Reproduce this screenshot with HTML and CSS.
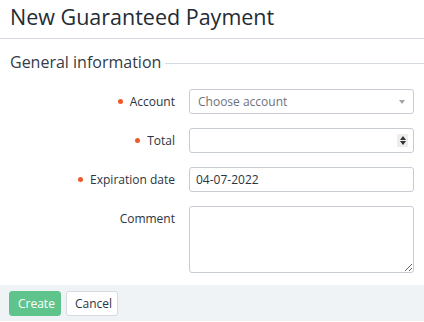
FILE: index.html
```html
<!DOCTYPE html>
<html>
<head>
<meta charset="utf-8">
<link rel="stylesheet" href="styles.css">
</head>
<body>
<div class="page">
  <h1 class="title">New Guaranteed Payment</h1>
  <div class="section">
    <div class="legend"><span class="legend-text">General information</span><span class="legend-line"></span></div>
    <div class="form">
      <div class="row">
        <label class="label"><span class="req"></span>Account</label>
        <div class="control select"><span class="placeholder">Choose account</span><span class="caret"></span></div>
      </div>
      <div class="row">
        <label class="label"><span class="req"></span>Total</label>
        <div class="control number"><span class="spin"><span class="up"></span><span class="down"></span></span></div>
      </div>
      <div class="row">
        <label class="label"><span class="req"></span>Expiration date</label>
        <input class="control input" type="text" value="04-07-2022">
      </div>
      <div class="row row-top">
        <label class="label label-top">Comment</label>
        <textarea class="control textarea"></textarea>
      </div>
    </div>
  </div>
  <div class="footer">
    <button class="btn btn-primary">Create</button>
    <button class="btn btn-default">Cancel</button>
  </div>
</div>
</body>
</html>
```
FILE: styles.css
```css
* { box-sizing: border-box; }
html, body { margin: 0; padding: 0; background: #fff; }
body { font-family: "Open Sans", sans-serif; color: #2b3440; }
.page { width: 424px; }
.title {
  margin: 0;
  font-size: 21.5px;
  font-weight: 400;
  line-height: 26px;
  padding: 4px 10px 8px;
  border-bottom: 1px solid #d5dbe1;
  color: #232b35;
}
.section { padding: 12px 0 0 10px; }
.legend { display: flex; align-items: center; height: 22px; }
.legend-text { font-size: 16px; color: #333c47; line-height: 22px; }
.legend-line { flex: 1; height: 1px; background: #d5dbe1; margin-left: 4px; margin-top: 3px; }
.form { padding: 16px 10px 12px 0; display: flex; flex-direction: column; gap: 14px; }
.row { display: flex; align-items: center; }
.row-top { align-items: flex-start; }
.label {
  width: 179px;
  padding-right: 14px;
  text-align: right;
  font-size: 12px;
  color: #2b3440;
  display: flex;
  justify-content: flex-end;
  align-items: center;
}
.label-top { padding-top: 4px; }
.req {
  width: 5px; height: 5px; border-radius: 50%;
  background: #f05a2b;
  margin-right: 7px;
}
.control {
  width: 225px;
  height: 25px;
  border: 1px solid #c6ccd2;
  border-radius: 3px;
  background: #fff;
  font-family: "Open Sans", sans-serif;
  font-size: 12px;
  color: #2b3440;
  padding: 0 6px;
  outline: none;
}
.control + .control { margin: 0; }
.row:nth-child(2) { margin-top: 0; }
.select { display: flex; align-items: center; justify-content: space-between; padding: 0 8px 0 8px; }
.placeholder { color: #6b737c; }
.caret {
  width: 0; height: 0;
  border-left: 3px solid transparent;
  border-right: 3px solid transparent;
  border-top: 4px solid #a0a6ac;
}
.number { display: flex; align-items: center; justify-content: flex-end; padding: 0 5px; }
.spin {
  width: 11px; height: 13px;
  background: #ededed;
  display: flex; flex-direction: column; align-items: center; justify-content: center; gap: 1px;
}
.up {
  width: 0; height: 0;
  border-left: 3.5px solid transparent;
  border-right: 3.5px solid transparent;
  border-bottom: 4px solid #333;
}
.down {
  width: 0; height: 0;
  border-left: 3.5px solid transparent;
  border-right: 3.5px solid transparent;
  border-top: 4px solid #333;
}
.textarea { height: 67px; resize: both; padding: 4px 6px; }
.footer {
  height: 36px;
  background: #f0f3f6;
  display: flex;
  align-items: center;
  gap: 5px;
  padding: 0 9px;
}
.btn {
  font-family: "Open Sans", sans-serif;
  font-size: 12px;
  height: 25px;
  padding: 0 8px;
  border-radius: 3px;
  cursor: pointer;
}
.btn-primary { background: #5fc48c; border: 1px solid #5fc48c; color: #fff; width: 52px; }
.btn-default { background: #fff; border: 1px solid #d5dbe1; color: #2b3440; width: 52px; }
```
